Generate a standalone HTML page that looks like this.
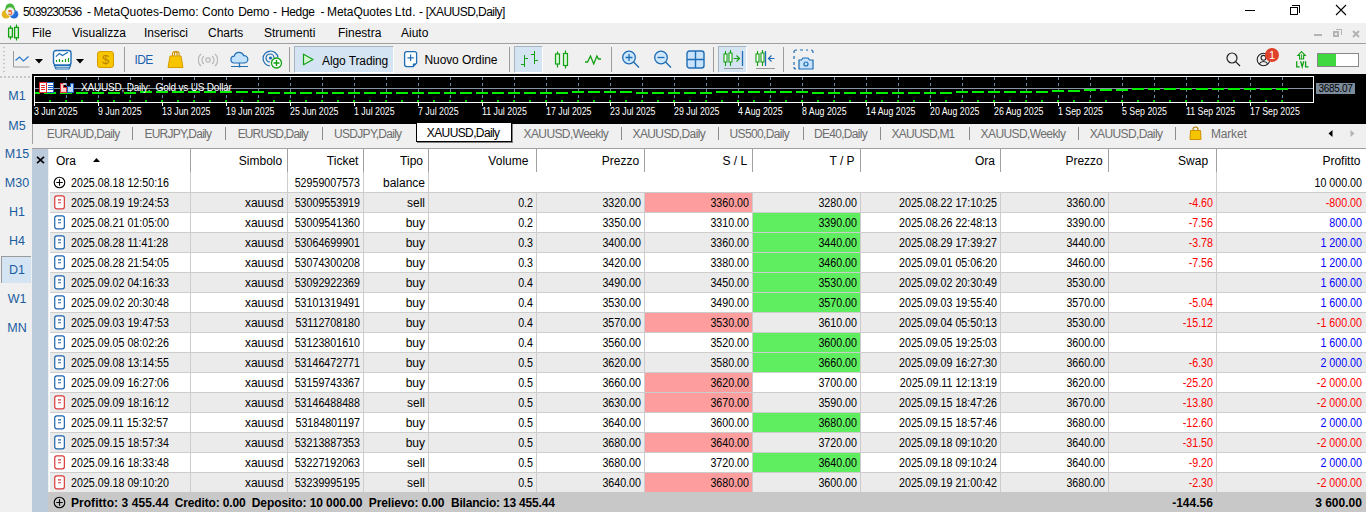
<!DOCTYPE html><html><head><meta charset="utf-8"><style>
*{box-sizing:border-box;margin:0;padding:0}
html,body{width:1366px;height:512px;overflow:hidden;background:#f0f0f0;font-family:"Liberation Sans",sans-serif;font-size:12px;color:#000}
.a{position:absolute;white-space:pre}
.t{position:absolute;white-space:pre;line-height:20px;height:20px}
.r{text-align:right}
</style></head><body>
<div class="a" style="left:0;top:0;width:1366px;height:23px;background:#fff"></div>
<div class="t" style="left:23.0px;top:2px;letter-spacing:-0.828px">5039230536</div>
<div class="t" style="left:87.0px;top:2px;letter-spacing:0.000px">-</div>
<div class="t" style="left:93.4px;top:2px;letter-spacing:0.025px">MetaQuotes-Demo:</div>
<div class="t" style="left:202.0px;top:2px;letter-spacing:-0.033px">Conto</div>
<div class="t" style="left:238.2px;top:2px;letter-spacing:-0.272px">Demo</div>
<div class="t" style="left:273.0px;top:2px;letter-spacing:0.000px">-</div>
<div class="t" style="left:280.9px;top:2px;letter-spacing:-0.319px">Hedge</div>
<div class="t" style="left:320.6px;top:2px;letter-spacing:0.000px">-</div>
<div class="t" style="left:327.0px;top:2px;letter-spacing:-0.053px">MetaQuotes</div>
<div class="t" style="left:394.7px;top:2px;letter-spacing:0.328px">Ltd.</div>
<div class="t" style="left:418.9px;top:2px;letter-spacing:0.000px">-</div>
<div class="t" style="left:425.8px;top:2px;letter-spacing:-0.553px">[XAUUSD,Daily]</div>
<svg class="a" style="left:0;top:0" width="22" height="22" viewBox="0 0 22 22"><path d="M4.5 10.5A6 6 0 0 1 15.5 9.5L14 12H6z" fill="#3cb034"/><circle cx="10" cy="8" r="4.5" fill="#44b83a"/><circle cx="6" cy="14.2" r="4.3" fill="#e5b51d"/><circle cx="14" cy="14.2" r="4.3" fill="#2370d8"/><circle cx="10.1" cy="11.6" r="4.2" fill="#f3f1ee" stroke="#d8d2c8" stroke-width="0.5"/><text x="10.2" y="14.6" font-size="8" font-weight="bold" fill="#e06018" text-anchor="middle" font-family="Liberation Sans">5</text></svg>
<div class="a" style="left:1245px;top:10px;width:10px;height:1px;background:#000"></div>
<div class="a" style="left:1290px;top:7px;width:8px;height:8px;border:1px solid #000;background:#fff"></div>
<div class="a" style="left:1292px;top:5px;width:8px;height:8px;border-top:1px solid #000;border-right:1px solid #000"></div>
<svg class="a" style="left:1335px;top:4px" width="12" height="12" viewBox="0 0 12 12"><path d="M1 1L11 11M11 1L1 11" stroke="#000" stroke-width="1.1"/></svg>
<div class="a" style="left:0;top:23px;width:1366px;height:20px;background:#f0f0f0"></div>
<div class="a" style="left:0;top:43px;width:1366px;height:1px;background:#a0a0a0"></div>
<svg class="a" style="left:7px;top:24px" width="14" height="17" viewBox="0 0 14 17">
<path d="M3.5 1.5v14M9.5 0.5v16" stroke="#10a010" stroke-width="1.2"/><rect x="1.6" y="4.2" width="3.8" height="8.8" fill="#e0f8e0" stroke="#10a010" stroke-width="1.3"/><rect x="7.6" y="3.4" width="3.8" height="10.4" fill="#e0f8e0" stroke="#10a010" stroke-width="1.3"/></svg>
<div class="t" style="left:32px;top:23px;line-height:21px">File</div>
<div class="t" style="left:72px;top:23px;line-height:21px">Visualizza</div>
<div class="t" style="left:144px;top:23px;line-height:21px">Inserisci</div>
<div class="t" style="left:208px;top:23px;line-height:21px">Charts</div>
<div class="t" style="left:264px;top:23px;line-height:21px">Strumenti</div>
<div class="t" style="left:338px;top:23px;line-height:21px">Finestra</div>
<div class="t" style="left:401px;top:23px;line-height:21px">Aiuto</div>
<div class="a" style="left:1314px;top:34px;width:8px;height:2px;background:#b4b4b4"></div>
<div class="a" style="left:1333px;top:31px;width:6px;height:6px;border:2px solid #b4b4b4"></div>
<div class="a" style="left:1336px;top:29px;width:6px;height:6px;border-top:1px solid #b4b4b4;border-right:1px solid #b4b4b4"></div>
<svg class="a" style="left:1352px;top:30px" width="8" height="8" viewBox="0 0 8 8"><path d="M1 1L7 7M7 1L1 7" stroke="#b4b4b4" stroke-width="2"/></svg>
<svg class="a" style="left:1px;top:46px" width="5" height="28"><path d="M2 2L4 1" stroke="#c4c4c4" stroke-width="1.2"/><path d="M2 6L4 5" stroke="#c4c4c4" stroke-width="1.2"/><path d="M2 10L4 9" stroke="#c4c4c4" stroke-width="1.2"/><path d="M2 14L4 13" stroke="#c4c4c4" stroke-width="1.2"/><path d="M2 18L4 17" stroke="#c4c4c4" stroke-width="1.2"/><path d="M2 22L4 21" stroke="#c4c4c4" stroke-width="1.2"/><path d="M2 26L4 25" stroke="#c4c4c4" stroke-width="1.2"/></svg>
<svg class="a" style="left:12px;top:50px" width="20" height="18" viewBox="0 0 20 18"><path d="M1.5 1v16h16" stroke="#9a9a9a" stroke-width="1" fill="none"/><path d="M3.5 10.5l4-3.5 4 4 5-4.5" stroke="#2a78c8" stroke-width="1.2" fill="none"/></svg>
<svg class="a" style="left:35px;top:59px" width="9" height="5"><path d="M0 0h8l-4 4.5z" fill="#000"/></svg>
<svg class="a" style="left:52px;top:49px" width="22" height="22" viewBox="0 0 22 22"><rect x="1.5" y="1.5" width="17.5" height="14.5" rx="2.5" fill="#fff" stroke="#1f6db5" stroke-width="1.4"/><path d="M3.8 7.6l3.6-3 3 2 5.6-3.4" stroke="#1f6db5" stroke-width="1.2" fill="none"/><path d="M4.5 13v-2M7.5 13v-3M10.5 13v-2M13.5 13v-3M16.5 13v-4" stroke="#14a014" stroke-width="1.2"/><path d="M2.5 16.5h16l-1.5 3.5h-13z" fill="#fff" stroke="#1f6db5" stroke-width="1.2"/><path d="M4 18.2h13" stroke="#1f6db5" stroke-width="1"/></svg>
<svg class="a" style="left:76px;top:59px" width="9" height="5"><path d="M0 0h8l-4 4.5z" fill="#000"/></svg>
<div class="a" style="left:97px;top:51px;width:17px;height:17px;background:#f7c600;border:1px solid #d79c00;border-radius:3px"></div>
<div class="t" style="left:97px;top:50px;width:17px;text-align:center;color:#b88300;font-size:13px;line-height:19px">$</div>
<div class="a" style="left:124px;top:47px;width:1px;height:25px;background:#9c9c9c"></div>
<div class="t" style="left:134.5px;top:50px;color:#1a62b0;font-size:12px;letter-spacing:-0.6px;transform:scaleY(1.05)">IDE</div>
<svg class="a" style="left:167px;top:50px" width="17" height="19" viewBox="0 0 17 19"><path d="M5.5 6V3.8a2.3 2.3 0 0 1 4.6 0V6M7.5 6V3.8a2.3 2.3 0 0 1 4.6 0V6" stroke="#cf9200" stroke-width="1.1" fill="none"/><path d="M3 6h11l2 11.5H1z" fill="#f7c600" stroke="#d79c00" stroke-width="1"/></svg>
<svg class="a" style="left:198px;top:53px" width="20" height="14" viewBox="0 0 20 14"><circle cx="10" cy="7" r="2.2" stroke="#b8b8b8" stroke-width="1.2" fill="none"/><path d="M6 3a5 5 0 0 0 0 8M14 3a5 5 0 0 1 0 8M3 1a8 8 0 0 0 0 12M17 1a8 8 0 0 1 0 12" stroke="#b8b8b8" stroke-width="1.2" fill="none"/></svg>
<svg class="a" style="left:230px;top:51px" width="19" height="17" viewBox="0 0 19 17"><path d="M4.5 12a3.4 3.4 0 0 1-.3-6.8 5 5 0 0 1 9.5-.6 3.4 3.4 0 0 1 .8 7.4z" fill="#c3e2fb" stroke="#1f6db5" stroke-width="1.2"/><path d="M9.5 12v3.5M1 15.5h17" stroke="#1f6db5" stroke-width="1.2"/><circle cx="9.5" cy="15.5" r="1.1" fill="#1f6db5"/></svg>
<svg class="a" style="left:262px;top:50px" width="21" height="19" viewBox="0 0 21 19"><path d="M8 16A7.5 7.5 0 1 1 16 7.5" stroke="#1f6db5" stroke-width="1.2" fill="none"/><path d="M8 12A4 4 0 1 1 12 8" stroke="#1f6db5" stroke-width="1.2" fill="none"/><circle cx="8.5" cy="8" r="1.6" fill="#1f6db5"/><circle cx="14.5" cy="13" r="5" fill="#fff" stroke="#14a014" stroke-width="1.3"/><path d="M14.5 10v6M11.5 13h6" stroke="#14a014" stroke-width="1.4"/></svg>
<div class="a" style="left:289px;top:47px;width:1px;height:25px;background:#9c9c9c"></div>
<div class="a" style="left:294px;top:46px;width:100px;height:27px;background:#d5e4f3;border-left:1px solid #a8b4c0;border-top:1px solid #a8b4c0;border-right:1px solid #fff;border-bottom:1px solid #fff"></div>
<svg class="a" style="left:302px;top:53px" width="13" height="13" viewBox="0 0 13 13"><path d="M1.5 1.2l9.5 5.3-9.5 5.3z" stroke="#14a014" stroke-width="1.2" fill="#d4f5d4" stroke-linejoin="round"/></svg>
<div class="t" style="left:322px;top:50.5px;letter-spacing:-0.1px">Algo Trading</div>
<svg class="a" style="left:403px;top:50px" width="16" height="19" viewBox="0 0 16 19"><path d="M3.6 1.6h8a2 2 0 0 1 2 2v9.5l-3.5 3.5h-6.5a2 2 0 0 1-2-2v-11a2 2 0 0 1 2-2z" fill="#fff" stroke="#1f6db5" stroke-width="1.3"/><path d="M7.6 4.5v6.5M4.4 7.8h6.4" stroke="#1f6db5" stroke-width="1.2"/><path d="M9.8 16.8v-3.4h3.6z" fill="#1f6db5"/></svg>
<div class="t" style="left:424.5px;top:50px;letter-spacing:-0.1px">Nuovo Ordine</div>
<div class="a" style="left:509px;top:47px;width:1px;height:25px;background:#9c9c9c"></div>
<div class="a" style="left:514px;top:46px;width:29px;height:27px;background:#d5e4f3;border-left:1px solid #a8b4c0;border-top:1px solid #a8b4c0;border-right:1px solid #fff;border-bottom:1px solid #fff"></div>
<svg class="a" style="left:518px;top:49px" width="24" height="22" viewBox="0 0 24 22" shape-rendering="crispEdges"><path d="M6.5 6v12M3 15.5h3.5M6.5 9.5h3M16.5 2v12.5M13 5.5h3.5M16.5 11.5h3.5" stroke="#14a014" stroke-width="1.4" fill="none"/></svg>
<svg class="a" style="left:553px;top:50px" width="17" height="19" viewBox="0 0 17 19"><path d="M4.5 1.5v16M12.5 0.5v18" stroke="#14a014" stroke-width="1.2"/><rect x="2.5" y="4" width="4" height="10" fill="#d6f6d6" stroke="#14a014" stroke-width="1.2"/><rect x="10.5" y="3.5" width="4" height="12" fill="#d6f6d6" stroke="#14a014" stroke-width="1.2"/></svg>
<svg class="a" style="left:584px;top:53px" width="18" height="12" viewBox="0 0 18 12"><path d="M1 9h2.5l3-6 3.2 8 3.2-8 1.6 3h2.5" stroke="#14a014" stroke-width="1.3" fill="none"/></svg>
<div class="a" style="left:611px;top:47px;width:1px;height:25px;background:#9c9c9c"></div>
<svg class="a" style="left:621px;top:50px" width="20" height="19" viewBox="0 0 20 19"><circle cx="8" cy="7.5" r="6.3" fill="#cfe7fc" stroke="#1f6db5" stroke-width="1.3"/><path d="M12.6 12.1l5.4 5.4" stroke="#1f6db5" stroke-width="1.4"/><path d="M8 4v7M4.5 7.5h7" stroke="#1f6db5" stroke-width="1.3"/></svg>
<svg class="a" style="left:653px;top:50px" width="20" height="19" viewBox="0 0 20 19"><circle cx="8" cy="7.5" r="6.3" fill="#cfe7fc" stroke="#1f6db5" stroke-width="1.3"/><path d="M12.6 12.1l5.4 5.4" stroke="#1f6db5" stroke-width="1.4"/><path d="M4.5 7.5h7" stroke="#1f6db5" stroke-width="1.3"/></svg>
<svg class="a" style="left:686px;top:50px" width="19" height="19" viewBox="0 0 19 19"><rect x="1" y="1" width="17" height="17" rx="2.5" fill="#c8e3fb" stroke="#1f6db5" stroke-width="1.4"/><path d="M9.5 1v17M1 9.5h17" stroke="#1f6db5" stroke-width="1.4"/></svg>
<div class="a" style="left:713px;top:47px;width:1px;height:25px;background:#9c9c9c"></div>
<div class="a" style="left:718px;top:46px;width:29px;height:27px;background:#d5e4f3;border-left:1px solid #a8b4c0;border-top:1px solid #a8b4c0;border-right:1px solid #fff;border-bottom:1px solid #fff"></div>
<svg class="a" style="left:722px;top:49px" width="24" height="22" viewBox="0 0 24 22"><path d="M3.5 2v15M8.5 1v16" stroke="#14a014" stroke-width="1.1"/><rect x="2" y="5" width="3" height="8" fill="#fff" stroke="#14a014" stroke-width="1.1"/><rect x="7" y="4" width="3" height="9" fill="#fff" stroke="#14a014" stroke-width="1.1"/><path d="M11.5 9.5h6M14.5 6.5l3 3-3 3" stroke="#14a014" stroke-width="1.2" fill="none"/><path d="M20.5 2v15" stroke="#1f6db5" stroke-width="1.3"/><path d="M2 19.5h19" stroke="#9a9a9a" stroke-width="1"/></svg>
<svg class="a" style="left:754px;top:49px" width="24" height="22" viewBox="0 0 24 22"><path d="M3.5 2v15M8.5 1v16" stroke="#14a014" stroke-width="1.1"/><rect x="2" y="5" width="3" height="8" fill="#fff" stroke="#14a014" stroke-width="1.1"/><rect x="7" y="4" width="3" height="9" fill="#fff" stroke="#14a014" stroke-width="1.1"/><path d="M11.5 2v15" stroke="#1f6db5" stroke-width="1.3"/><path d="M20.5 9.5h-6M17.5 6.5l-3 3 3 3" stroke="#1f6db5" stroke-width="1.2" fill="none"/><path d="M2 19.5h19" stroke="#9a9a9a" stroke-width="1"/></svg>
<div class="a" style="left:783px;top:47px;width:1px;height:25px;background:#9c9c9c"></div>
<svg class="a" style="left:793px;top:49px" width="21" height="21" viewBox="0 0 21 21"><path d="M1 4V3a2 2 0 0 1 2-2h1M7 1h3M13 1h2M18 1a2 2 0 0 1 2 2v1M1 7v3M1 13v3M1 18a2 2 0 0 0 2 2" stroke="#1f6db5" stroke-width="1.2" fill="none"/><path d="M6 11h2.5l1.5-2h5l1.5 2h3.5v9H6z" fill="#c8e3fb" stroke="#1f6db5" stroke-width="1.2"/><circle cx="13" cy="15" r="2" stroke="#1f6db5" stroke-width="1.2" fill="none"/></svg>
<svg class="a" style="left:1226px;top:52px" width="15" height="15" viewBox="0 0 15 15"><circle cx="6" cy="6" r="5" stroke="#222" stroke-width="1.2" fill="none"/><path d="M9.6 9.6L14 14" stroke="#222" stroke-width="1.3"/></svg>
<svg class="a" style="left:1256px;top:52px" width="15" height="15" viewBox="0 0 15 15"><circle cx="7.5" cy="7.5" r="6.3" stroke="#222" stroke-width="1.1" fill="none"/><circle cx="7.5" cy="5.8" r="2.4" stroke="#222" stroke-width="1.1" fill="none"/><path d="M3.2 12a5 5 0 0 1 8.6 0" stroke="#222" stroke-width="1.1" fill="none"/></svg>
<div class="a" style="left:1265px;top:48px;width:14px;height:14px;border-radius:7px;background:#e0412b;color:#fff;font-size:11px;line-height:14px;text-align:center">1</div>
<svg class="a" style="left:1294px;top:50px" width="16" height="19" viewBox="0 0 16 19"><path d="M7.6 1.6l3.7 3.8H9.6v3.6H5.6V5.4H3.9z" fill="none" stroke="#14a014" stroke-width="1.1"/><path d="M7.6 4.2v4.6" stroke="#14a014" stroke-width="0.9"/><path d="M2.7 11.2v5.6h3M6.6 11.2l1.6 5.6 1.6-5.6M11.6 11.2v5.6h3" fill="none" stroke="#14a014" stroke-width="1.3"/></svg>
<div class="a" style="left:1317px;top:53px;width:42px;height:14px;border:1px solid #888;background:#fff"><div style="width:18px;height:12px;background:#3fd83f"></div></div>
<div class="a" style="left:0;top:76px;width:30px;height:2px;background:repeating-linear-gradient(90deg,#c8c8c8 0 2px,transparent 2px 4px)"></div>
<div class="a" style="left:1px;top:256px;width:30px;height:27px;background:#d5e4f3;border-top:1px solid #9a9a9a;border-left:1px solid #9a9a9a"></div>
<div class="t r" style="left:1px;width:32px;text-align:center;top:86px;color:#1a5c9f;font-size:12.5px">M1</div>
<div class="t r" style="left:1px;width:32px;text-align:center;top:116px;color:#1a5c9f;font-size:12.5px">M5</div>
<div class="t r" style="left:1px;width:32px;text-align:center;top:144px;color:#1a5c9f;font-size:12.5px">M15</div>
<div class="t r" style="left:1px;width:32px;text-align:center;top:173px;color:#1a5c9f;font-size:12.5px">M30</div>
<div class="t r" style="left:1px;width:32px;text-align:center;top:202px;color:#1a5c9f;font-size:12.5px">H1</div>
<div class="t r" style="left:1px;width:32px;text-align:center;top:231px;color:#1a5c9f;font-size:12.5px">H4</div>
<div class="t r" style="left:1px;width:32px;text-align:center;top:260px;color:#1a5c9f;font-size:12.5px">D1</div>
<div class="t r" style="left:1px;width:32px;text-align:center;top:289px;color:#1a5c9f;font-size:12.5px">W1</div>
<div class="t r" style="left:1px;width:32px;text-align:center;top:318px;color:#1a5c9f;font-size:12.5px">MN</div>
<div class="a" style="left:32px;top:74px;width:1334px;height:50px;background:#000"></div>
<svg class="a" style="left:0;top:0" width="1366" height="130" shape-rendering="crispEdges"><path d="M34 76.5H1314M34 102.5H1314M34.5 76V103M1313.5 76V103" stroke="#fff" stroke-width="1"/><path d="M66.5 77V102" stroke="#6c87a5" stroke-width="1" stroke-dasharray="3 3"/><path d="M98.5 77V102" stroke="#6c87a5" stroke-width="1" stroke-dasharray="3 3"/><path d="M130.5 77V102" stroke="#6c87a5" stroke-width="1" stroke-dasharray="3 3"/><path d="M162.5 77V102" stroke="#6c87a5" stroke-width="1" stroke-dasharray="3 3"/><path d="M194.5 77V102" stroke="#6c87a5" stroke-width="1" stroke-dasharray="3 3"/><path d="M226.5 77V102" stroke="#6c87a5" stroke-width="1" stroke-dasharray="3 3"/><path d="M258.5 77V102" stroke="#6c87a5" stroke-width="1" stroke-dasharray="3 3"/><path d="M290.5 77V102" stroke="#6c87a5" stroke-width="1" stroke-dasharray="3 3"/><path d="M322.5 77V102" stroke="#6c87a5" stroke-width="1" stroke-dasharray="3 3"/><path d="M354.5 77V102" stroke="#6c87a5" stroke-width="1" stroke-dasharray="3 3"/><path d="M386.5 77V102" stroke="#6c87a5" stroke-width="1" stroke-dasharray="3 3"/><path d="M418.5 77V102" stroke="#6c87a5" stroke-width="1" stroke-dasharray="3 3"/><path d="M450.5 77V102" stroke="#6c87a5" stroke-width="1" stroke-dasharray="3 3"/><path d="M482.5 77V102" stroke="#6c87a5" stroke-width="1" stroke-dasharray="3 3"/><path d="M514.5 77V102" stroke="#6c87a5" stroke-width="1" stroke-dasharray="3 3"/><path d="M546.5 77V102" stroke="#6c87a5" stroke-width="1" stroke-dasharray="3 3"/><path d="M578.5 77V102" stroke="#6c87a5" stroke-width="1" stroke-dasharray="3 3"/><path d="M610.5 77V102" stroke="#6c87a5" stroke-width="1" stroke-dasharray="3 3"/><path d="M642.5 77V102" stroke="#6c87a5" stroke-width="1" stroke-dasharray="3 3"/><path d="M674.5 77V102" stroke="#6c87a5" stroke-width="1" stroke-dasharray="3 3"/><path d="M706.5 77V102" stroke="#6c87a5" stroke-width="1" stroke-dasharray="3 3"/><path d="M738.5 77V102" stroke="#6c87a5" stroke-width="1" stroke-dasharray="3 3"/><path d="M770.5 77V102" stroke="#6c87a5" stroke-width="1" stroke-dasharray="3 3"/><path d="M802.5 77V102" stroke="#6c87a5" stroke-width="1" stroke-dasharray="3 3"/><path d="M834.5 77V102" stroke="#6c87a5" stroke-width="1" stroke-dasharray="3 3"/><path d="M866.5 77V102" stroke="#6c87a5" stroke-width="1" stroke-dasharray="3 3"/><path d="M898.5 77V102" stroke="#6c87a5" stroke-width="1" stroke-dasharray="3 3"/><path d="M930.5 77V102" stroke="#6c87a5" stroke-width="1" stroke-dasharray="3 3"/><path d="M962.5 77V102" stroke="#6c87a5" stroke-width="1" stroke-dasharray="3 3"/><path d="M994.5 77V102" stroke="#6c87a5" stroke-width="1" stroke-dasharray="3 3"/><path d="M1026.5 77V102" stroke="#6c87a5" stroke-width="1" stroke-dasharray="3 3"/><path d="M1058.5 77V102" stroke="#6c87a5" stroke-width="1" stroke-dasharray="3 3"/><path d="M1090.5 77V102" stroke="#6c87a5" stroke-width="1" stroke-dasharray="3 3"/><path d="M1122.5 77V102" stroke="#6c87a5" stroke-width="1" stroke-dasharray="3 3"/><path d="M1154.5 77V102" stroke="#6c87a5" stroke-width="1" stroke-dasharray="3 3"/><path d="M1186.5 77V102" stroke="#6c87a5" stroke-width="1" stroke-dasharray="3 3"/><path d="M1218.5 77V102" stroke="#6c87a5" stroke-width="1" stroke-dasharray="3 3"/><path d="M1250.5 77V102" stroke="#6c87a5" stroke-width="1" stroke-dasharray="3 3"/><path d="M1282.5 77V102" stroke="#6c87a5" stroke-width="1" stroke-dasharray="3 3"/><path d="M35 88.5H1313" stroke="#8795a4" stroke-width="1"/><rect x="35" y="92" width="5" height="2" fill="#00f000"/><rect x="44" y="92" width="12" height="2" fill="#00f000"/><rect x="60" y="92" width="12" height="2" fill="#00f000"/><rect x="76" y="92" width="12" height="2" fill="#00f000"/><rect x="92" y="92" width="12" height="2" fill="#00f000"/><rect x="108" y="92" width="12" height="2" fill="#00f000"/><rect x="124" y="92" width="12" height="2" fill="#00f000"/><rect x="140" y="91" width="12" height="2" fill="#00f000"/><rect x="156" y="91" width="12" height="2" fill="#00f000"/><rect x="172" y="91" width="12" height="2" fill="#00f000"/><rect x="188" y="91" width="12" height="2" fill="#00f000"/><rect x="204" y="91" width="12" height="2" fill="#00f000"/><rect x="220" y="91" width="12" height="2" fill="#00f000"/><rect x="236" y="91" width="12" height="2" fill="#00f000"/><rect x="252" y="91" width="12" height="2" fill="#00f000"/><rect x="268" y="92" width="12" height="2" fill="#00f000"/><rect x="284" y="92" width="12" height="2" fill="#00f000"/><rect x="300" y="92" width="12" height="2" fill="#00f000"/><rect x="316" y="92" width="12" height="2" fill="#00f000"/><rect x="332" y="92" width="12" height="2" fill="#00f000"/><rect x="348" y="92" width="12" height="2" fill="#00f000"/><rect x="364" y="92" width="12" height="2" fill="#00f000"/><rect x="380" y="92" width="12" height="2" fill="#00f000"/><rect x="396" y="92" width="12" height="2" fill="#00f000"/><rect x="412" y="92" width="12" height="2" fill="#00f000"/><rect x="428" y="92" width="12" height="2" fill="#00f000"/><rect x="444" y="92" width="12" height="2" fill="#00f000"/><rect x="460" y="92" width="12" height="2" fill="#00f000"/><rect x="476" y="92" width="12" height="2" fill="#00f000"/><rect x="492" y="92" width="12" height="2" fill="#00f000"/><rect x="508" y="92" width="12" height="2" fill="#00f000"/><rect x="524" y="92" width="12" height="2" fill="#00f000"/><rect x="540" y="92" width="12" height="2" fill="#00f000"/><rect x="556" y="92" width="12" height="2" fill="#00f000"/><rect x="572" y="91" width="12" height="2" fill="#00f000"/><rect x="588" y="91" width="12" height="2" fill="#00f000"/><rect x="604" y="91" width="12" height="2" fill="#00f000"/><rect x="620" y="91" width="12" height="2" fill="#00f000"/><rect x="636" y="92" width="12" height="2" fill="#00f000"/><rect x="652" y="92" width="12" height="2" fill="#00f000"/><rect x="668" y="92" width="12" height="2" fill="#00f000"/><rect x="684" y="92" width="12" height="2" fill="#00f000"/><rect x="700" y="92" width="12" height="2" fill="#00f000"/><rect x="716" y="91" width="12" height="2" fill="#00f000"/><rect x="732" y="91" width="12" height="2" fill="#00f000"/><rect x="748" y="91" width="12" height="2" fill="#00f000"/><rect x="764" y="91" width="12" height="2" fill="#00f000"/><rect x="780" y="91" width="12" height="2" fill="#00f000"/><rect x="796" y="91" width="12" height="2" fill="#00f000"/><rect x="812" y="92" width="12" height="2" fill="#00f000"/><rect x="828" y="92" width="12" height="2" fill="#00f000"/><rect x="844" y="92" width="12" height="2" fill="#00f000"/><rect x="860" y="92" width="12" height="2" fill="#00f000"/><rect x="876" y="92" width="12" height="2" fill="#00f000"/><rect x="892" y="92" width="12" height="2" fill="#00f000"/><rect x="908" y="92" width="12" height="2" fill="#00f000"/><rect x="924" y="92" width="12" height="2" fill="#00f000"/><rect x="940" y="92" width="12" height="2" fill="#00f000"/><rect x="956" y="91" width="12" height="2" fill="#00f000"/><rect x="972" y="91" width="12" height="2" fill="#00f000"/><rect x="988" y="91" width="12" height="2" fill="#00f000"/><rect x="1004" y="91" width="12" height="2" fill="#00f000"/><rect x="1020" y="91" width="12" height="2" fill="#00f000"/><rect x="1036" y="91" width="12" height="2" fill="#00f000"/><rect x="1052" y="90" width="12" height="2" fill="#00f000"/><rect x="1068" y="90" width="12" height="2" fill="#00f000"/><rect x="1084" y="89" width="12" height="2" fill="#00f000"/><rect x="1100" y="89" width="12" height="2" fill="#00f000"/><rect x="1116" y="89" width="12" height="2" fill="#00f000"/><rect x="1132" y="88" width="12" height="2" fill="#00f000"/><rect x="1148" y="88" width="12" height="2" fill="#00f000"/><rect x="1164" y="88" width="12" height="2" fill="#00f000"/><rect x="1180" y="88" width="12" height="2" fill="#00f000"/><rect x="1196" y="88" width="12" height="2" fill="#00f000"/><rect x="1212" y="88" width="12" height="2" fill="#00f000"/><rect x="1228" y="88" width="12" height="2" fill="#00f000"/><rect x="1244" y="88" width="12" height="2" fill="#00f000"/><rect x="1260" y="88" width="12" height="2" fill="#00f000"/><rect x="1276" y="88" width="12" height="2" fill="#00f000"/><rect x="49" y="100" width="2" height="2" fill="#00c800"/><rect x="65" y="100" width="2" height="2" fill="#00c800"/><rect x="81" y="100" width="2" height="2" fill="#00c800"/><rect x="97" y="100" width="2" height="2" fill="#00c800"/><rect x="113" y="100" width="2" height="2" fill="#00c800"/><rect x="129" y="100" width="2" height="2" fill="#00c800"/><rect x="145" y="100" width="2" height="2" fill="#00c800"/><rect x="161" y="100" width="2" height="2" fill="#00c800"/><rect x="177" y="100" width="2" height="2" fill="#00c800"/><rect x="193" y="100" width="2" height="2" fill="#00c800"/><rect x="209" y="100" width="2" height="2" fill="#00c800"/><rect x="225" y="100" width="2" height="2" fill="#00c800"/><rect x="241" y="100" width="2" height="2" fill="#00c800"/><rect x="257" y="100" width="2" height="2" fill="#00c800"/><rect x="273" y="100" width="2" height="2" fill="#00c800"/><rect x="289" y="100" width="2" height="2" fill="#00c800"/><rect x="305" y="100" width="2" height="2" fill="#00c800"/><rect x="321" y="100" width="2" height="2" fill="#00c800"/><rect x="337" y="100" width="2" height="2" fill="#00c800"/><rect x="353" y="100" width="2" height="2" fill="#00c800"/><rect x="369" y="100" width="2" height="2" fill="#00c800"/><rect x="385" y="100" width="2" height="2" fill="#00c800"/><rect x="401" y="100" width="2" height="2" fill="#00c800"/><rect x="417" y="100" width="2" height="2" fill="#00c800"/><rect x="433" y="100" width="2" height="2" fill="#00c800"/><rect x="449" y="100" width="2" height="2" fill="#00c800"/><rect x="465" y="100" width="2" height="2" fill="#00c800"/><rect x="481" y="100" width="2" height="2" fill="#00c800"/><rect x="497" y="100" width="2" height="2" fill="#00c800"/><rect x="513" y="100" width="2" height="2" fill="#00c800"/><rect x="529" y="100" width="2" height="2" fill="#00c800"/><rect x="545" y="100" width="2" height="2" fill="#00c800"/><rect x="561" y="100" width="2" height="2" fill="#00c800"/><rect x="577" y="100" width="2" height="2" fill="#00c800"/><rect x="593" y="100" width="2" height="2" fill="#00c800"/><rect x="609" y="100" width="2" height="2" fill="#00c800"/><rect x="625" y="100" width="2" height="2" fill="#00c800"/><rect x="641" y="100" width="2" height="2" fill="#00c800"/><rect x="657" y="100" width="2" height="2" fill="#00c800"/><rect x="673" y="100" width="2" height="2" fill="#00c800"/><rect x="689" y="100" width="2" height="2" fill="#00c800"/><rect x="705" y="100" width="2" height="2" fill="#00c800"/><rect x="721" y="100" width="2" height="2" fill="#00c800"/><rect x="737" y="100" width="2" height="2" fill="#00c800"/><rect x="753" y="100" width="2" height="2" fill="#00c800"/><rect x="769" y="100" width="2" height="2" fill="#00c800"/><rect x="785" y="100" width="2" height="2" fill="#00c800"/><rect x="801" y="100" width="2" height="2" fill="#00c800"/><rect x="817" y="100" width="2" height="2" fill="#00c800"/><rect x="833" y="100" width="2" height="2" fill="#00c800"/><rect x="849" y="100" width="2" height="2" fill="#00c800"/><rect x="865" y="100" width="2" height="2" fill="#00c800"/><rect x="881" y="100" width="2" height="2" fill="#00c800"/><rect x="897" y="100" width="2" height="2" fill="#00c800"/><rect x="913" y="100" width="2" height="2" fill="#00c800"/><rect x="929" y="100" width="2" height="2" fill="#00c800"/><rect x="945" y="100" width="2" height="2" fill="#00c800"/><rect x="961" y="100" width="2" height="2" fill="#00c800"/><rect x="977" y="100" width="2" height="2" fill="#00c800"/><rect x="993" y="100" width="2" height="2" fill="#00c800"/><rect x="1009" y="100" width="2" height="2" fill="#00c800"/><rect x="1025" y="100" width="2" height="2" fill="#00c800"/><rect x="1041" y="100" width="2" height="2" fill="#00c800"/><rect x="1057" y="100" width="2" height="2" fill="#00c800"/><rect x="1073" y="100" width="2" height="2" fill="#00c800"/><rect x="1089" y="100" width="2" height="2" fill="#00c800"/><rect x="1105" y="100" width="2" height="2" fill="#00c800"/><rect x="1121" y="100" width="2" height="2" fill="#00c800"/><rect x="1137" y="100" width="2" height="2" fill="#00c800"/><rect x="1153" y="100" width="2" height="2" fill="#00c800"/><rect x="1169" y="100" width="2" height="2" fill="#00c800"/><rect x="1185" y="100" width="2" height="2" fill="#00c800"/><rect x="1201" y="100" width="2" height="2" fill="#00c800"/><rect x="1217" y="100" width="2" height="2" fill="#00c800"/><rect x="1233" y="100" width="2" height="2" fill="#00c800"/><rect x="1249" y="100" width="2" height="2" fill="#00c800"/><rect x="1265" y="100" width="2" height="2" fill="#00c800"/><rect x="1281" y="100" width="2" height="2" fill="#00c800"/><path d="M34.5 103V106" stroke="#fff"/><path d="M98.5 103V106" stroke="#fff"/><path d="M162.5 103V106" stroke="#fff"/><path d="M226.5 103V106" stroke="#fff"/><path d="M290.5 103V106" stroke="#fff"/><path d="M354.5 103V106" stroke="#fff"/><path d="M418.5 103V106" stroke="#fff"/><path d="M482.5 103V106" stroke="#fff"/><path d="M546.5 103V106" stroke="#fff"/><path d="M610.5 103V106" stroke="#fff"/><path d="M674.5 103V106" stroke="#fff"/><path d="M738.5 103V106" stroke="#fff"/><path d="M802.5 103V106" stroke="#fff"/><path d="M866.5 103V106" stroke="#fff"/><path d="M930.5 103V106" stroke="#fff"/><path d="M994.5 103V106" stroke="#fff"/><path d="M1058.5 103V106" stroke="#fff"/><path d="M1122.5 103V106" stroke="#fff"/><path d="M1186.5 103V106" stroke="#fff"/><path d="M1250.5 103V106" stroke="#fff"/></svg>
<svg class="a" style="left:39px;top:82px" width="36" height="11" viewBox="0 0 36 11" shape-rendering="crispEdges"><rect x="0.5" y="0.5" width="14" height="10" fill="#fff" stroke="#2060c0"/><rect x="0.5" y="0.5" width="7" height="10" fill="#fff" stroke="#e03030"/><path d="M2 3h4M2 5h4M2 7h4" stroke="#e03030"/><path d="M9 3h5M9 5h5M9 7h5" stroke="#2060c0"/><path d="M21.5 1.5v9h6V5.5h-3V1.5z" fill="#fbd0d0" stroke="#e03030"/><rect x="24" y="1" width="3" height="1.5" fill="#c8c8c8"/><path d="M28.5 10.5v-6h3V1.5h3v9z" fill="#b8dcf8" stroke="#2060c0"/></svg>
<div class="t" style="left:81px;top:78px;color:#fff;font-size:10px;line-height:20px;letter-spacing:-0.2px">XAUUSD, Daily:  Gold vs US Dollar</div>
<div class="t" style="left:34px;top:102px;color:#fff;font-size:10px;transform:scaleX(0.88);transform-origin:0 0">3 Jun 2025</div>
<div class="t" style="left:98px;top:102px;color:#fff;font-size:10px;transform:scaleX(0.88);transform-origin:0 0">9 Jun 2025</div>
<div class="t" style="left:162px;top:102px;color:#fff;font-size:10px;transform:scaleX(0.88);transform-origin:0 0">13 Jun 2025</div>
<div class="t" style="left:226px;top:102px;color:#fff;font-size:10px;transform:scaleX(0.88);transform-origin:0 0">19 Jun 2025</div>
<div class="t" style="left:290px;top:102px;color:#fff;font-size:10px;transform:scaleX(0.88);transform-origin:0 0">25 Jun 2025</div>
<div class="t" style="left:354px;top:102px;color:#fff;font-size:10px;transform:scaleX(0.88);transform-origin:0 0">1 Jul 2025</div>
<div class="t" style="left:418px;top:102px;color:#fff;font-size:10px;transform:scaleX(0.88);transform-origin:0 0">7 Jul 2025</div>
<div class="t" style="left:482px;top:102px;color:#fff;font-size:10px;transform:scaleX(0.88);transform-origin:0 0">11 Jul 2025</div>
<div class="t" style="left:546px;top:102px;color:#fff;font-size:10px;transform:scaleX(0.88);transform-origin:0 0">17 Jul 2025</div>
<div class="t" style="left:610px;top:102px;color:#fff;font-size:10px;transform:scaleX(0.88);transform-origin:0 0">23 Jul 2025</div>
<div class="t" style="left:674px;top:102px;color:#fff;font-size:10px;transform:scaleX(0.88);transform-origin:0 0">29 Jul 2025</div>
<div class="t" style="left:738px;top:102px;color:#fff;font-size:10px;transform:scaleX(0.88);transform-origin:0 0">4 Aug 2025</div>
<div class="t" style="left:802px;top:102px;color:#fff;font-size:10px;transform:scaleX(0.88);transform-origin:0 0">8 Aug 2025</div>
<div class="t" style="left:866px;top:102px;color:#fff;font-size:10px;transform:scaleX(0.88);transform-origin:0 0">14 Aug 2025</div>
<div class="t" style="left:930px;top:102px;color:#fff;font-size:10px;transform:scaleX(0.88);transform-origin:0 0">20 Aug 2025</div>
<div class="t" style="left:994px;top:102px;color:#fff;font-size:10px;transform:scaleX(0.88);transform-origin:0 0">26 Aug 2025</div>
<div class="t" style="left:1058px;top:102px;color:#fff;font-size:10px;transform:scaleX(0.88);transform-origin:0 0">1 Sep 2025</div>
<div class="t" style="left:1122px;top:102px;color:#fff;font-size:10px;transform:scaleX(0.88);transform-origin:0 0">5 Sep 2025</div>
<div class="t" style="left:1186px;top:102px;color:#fff;font-size:10px;transform:scaleX(0.88);transform-origin:0 0">11 Sep 2025</div>
<div class="t" style="left:1250px;top:102px;color:#fff;font-size:10px;transform:scaleX(0.88);transform-origin:0 0">17 Sep 2025</div>
<div class="t" style="left:1316px;top:83px;width:39px;height:11px;line-height:12.5px;background:#7b8b9b;color:#000;font-size:10px;letter-spacing:-0.3px;text-align:center">3685.07</div>
<div class="a" style="left:32px;top:124px;width:1334px;height:24px;background:#f0f0f0"></div>
<div class="a" style="left:32px;top:124px;width:1px;height:20px;background:#a0a0a0"></div>
<div class="t" style="left:46.8px;top:123.5px;color:#6d6d6d;letter-spacing:-0.653px">EURAUD,Daily</div>
<div class="t" style="left:144.4px;top:123.5px;color:#6d6d6d;letter-spacing:-0.747px">EURJPY,Daily</div>
<div class="t" style="left:237.70000000000002px;top:123.5px;color:#6d6d6d;letter-spacing:-0.872px">EURUSD,Daily</div>
<div class="t" style="left:334.1px;top:123.5px;color:#6d6d6d;letter-spacing:-0.710px">USDJPY,Daily</div>
<div class="a" style="left:416px;top:123px;width:96px;height:19px;background:#fff;border:1px solid #000;border-top:none;box-shadow:1px 1px 0 #808080"></div>
<div class="t" style="left:426.8px;top:122.5px;color:#000;letter-spacing:-0.611px">XAUUSD,Daily</div>
<div class="t" style="left:523.5px;top:123.5px;color:#6d6d6d;letter-spacing:-0.597px">XAUUSD,Weekly</div>
<div class="t" style="left:632.5px;top:123.5px;color:#6d6d6d;letter-spacing:-0.611px">XAUUSD,Daily</div>
<div class="t" style="left:729.5999999999999px;top:123.5px;color:#6d6d6d;letter-spacing:-0.650px">US500,Daily</div>
<div class="t" style="left:813.9px;top:123.5px;color:#6d6d6d;letter-spacing:-0.681px">DE40,Daily</div>
<div class="t" style="left:891.5999999999999px;top:123.5px;color:#6d6d6d;letter-spacing:-0.789px">XAUUSD,M1</div>
<div class="t" style="left:980.5999999999999px;top:123.5px;color:#6d6d6d;letter-spacing:-0.597px">XAUUSD,Weekly</div>
<div class="t" style="left:1089.7px;top:123.5px;color:#6d6d6d;letter-spacing:-0.611px">XAUUSD,Daily</div>
<div class="t" style="left:1210.8999999999999px;top:123.5px;color:#6d6d6d;letter-spacing:-0.158px">Market</div>
<div class="a" style="left:132px;top:127px;width:1px;height:13px;background:#8c8c8c"></div>
<div class="a" style="left:225px;top:127px;width:1px;height:13px;background:#8c8c8c"></div>
<div class="a" style="left:322px;top:127px;width:1px;height:13px;background:#8c8c8c"></div>
<div class="a" style="left:621px;top:127px;width:1px;height:13px;background:#8c8c8c"></div>
<div class="a" style="left:718px;top:127px;width:1px;height:13px;background:#8c8c8c"></div>
<div class="a" style="left:803px;top:127px;width:1px;height:13px;background:#8c8c8c"></div>
<div class="a" style="left:880px;top:127px;width:1px;height:13px;background:#8c8c8c"></div>
<div class="a" style="left:969px;top:127px;width:1px;height:13px;background:#8c8c8c"></div>
<div class="a" style="left:1078px;top:127px;width:1px;height:13px;background:#8c8c8c"></div>
<div class="a" style="left:1175px;top:127px;width:1px;height:13px;background:#8c8c8c"></div>
<svg class="a" style="left:1189px;top:126px" width="13" height="15" viewBox="0 0 13 15"><path d="M4 5V3.5a2.5 2.5 0 0 1 5 0V5" stroke="#b07800" stroke-width="1.1" fill="none"/><path d="M1.5 4.5h10l.5 9H1z" fill="#f5c400" stroke="#d09000" stroke-width="1"/></svg>
<svg class="a" style="left:1328px;top:130px" width="5" height="8"><path d="M4.5 0v7L0.5 3.5z" fill="#000"/></svg>
<svg class="a" style="left:1350px;top:130px" width="5" height="8"><path d="M0.5 0v7l4-3.5z" fill="#b4b4b4"/></svg>
<div class="a" style="left:32px;top:148px;width:1334px;height:364px;background:#fff"></div>
<div class="a" style="left:32px;top:148px;width:1334px;height:1px;background:#a0a0a0"></div>
<div class="a" style="left:32px;top:149px;width:16px;height:363px;background:#bccbdc"></div>
<svg class="a" style="left:36px;top:156px" width="9" height="8"><path d="M1 0.8L8 7.2M8 0.8L1 7.2" stroke="#000" stroke-width="1.6"/></svg>
<div class="a" style="left:50px;top:172px;width:1316px;height:20px;background:#fff"></div>
<div class="a" style="left:50px;top:192px;width:1316px;height:20px;background:#ebebeb"></div>
<div class="a" style="left:50px;top:192px;width:1316px;height:1px;background:#cdcdcd"></div>
<div class="a" style="left:50px;top:212px;width:1316px;height:20px;background:#fff"></div>
<div class="a" style="left:50px;top:212px;width:1316px;height:1px;background:#cdcdcd"></div>
<div class="a" style="left:50px;top:232px;width:1316px;height:20px;background:#ebebeb"></div>
<div class="a" style="left:50px;top:232px;width:1316px;height:1px;background:#cdcdcd"></div>
<div class="a" style="left:50px;top:252px;width:1316px;height:20px;background:#fff"></div>
<div class="a" style="left:50px;top:252px;width:1316px;height:1px;background:#cdcdcd"></div>
<div class="a" style="left:50px;top:272px;width:1316px;height:20px;background:#ebebeb"></div>
<div class="a" style="left:50px;top:272px;width:1316px;height:1px;background:#cdcdcd"></div>
<div class="a" style="left:50px;top:292px;width:1316px;height:20px;background:#fff"></div>
<div class="a" style="left:50px;top:292px;width:1316px;height:1px;background:#cdcdcd"></div>
<div class="a" style="left:50px;top:312px;width:1316px;height:20px;background:#ebebeb"></div>
<div class="a" style="left:50px;top:312px;width:1316px;height:1px;background:#cdcdcd"></div>
<div class="a" style="left:50px;top:332px;width:1316px;height:20px;background:#fff"></div>
<div class="a" style="left:50px;top:332px;width:1316px;height:1px;background:#cdcdcd"></div>
<div class="a" style="left:50px;top:352px;width:1316px;height:20px;background:#ebebeb"></div>
<div class="a" style="left:50px;top:352px;width:1316px;height:1px;background:#cdcdcd"></div>
<div class="a" style="left:50px;top:372px;width:1316px;height:20px;background:#fff"></div>
<div class="a" style="left:50px;top:372px;width:1316px;height:1px;background:#cdcdcd"></div>
<div class="a" style="left:50px;top:392px;width:1316px;height:20px;background:#ebebeb"></div>
<div class="a" style="left:50px;top:392px;width:1316px;height:1px;background:#cdcdcd"></div>
<div class="a" style="left:50px;top:412px;width:1316px;height:20px;background:#fff"></div>
<div class="a" style="left:50px;top:412px;width:1316px;height:1px;background:#cdcdcd"></div>
<div class="a" style="left:50px;top:432px;width:1316px;height:20px;background:#ebebeb"></div>
<div class="a" style="left:50px;top:432px;width:1316px;height:1px;background:#cdcdcd"></div>
<div class="a" style="left:50px;top:452px;width:1316px;height:20px;background:#fff"></div>
<div class="a" style="left:50px;top:452px;width:1316px;height:1px;background:#cdcdcd"></div>
<div class="a" style="left:50px;top:472px;width:1316px;height:20px;background:#ebebeb"></div>
<div class="a" style="left:50px;top:472px;width:1316px;height:1px;background:#cdcdcd"></div>
<div class="a" style="left:48px;top:492px;width:1318px;height:20px;background:#c8c8c8"></div>
<div class="a" style="left:48px;top:149px;width:1px;height:343px;background:#f0f0f0"></div>
<div class="t" style="left:56px;top:151px">Ora</div>
<div class="t" style="left:132.20000000000002px;width:150px;text-align:right;top:151px">Simbolo</div>
<div class="t" style="left:208.4px;width:150px;text-align:right;top:151px">Ticket</div>
<div class="t" style="left:273.0px;width:150px;text-align:right;top:151px">Tipo</div>
<div class="t" style="left:378.4px;width:150px;text-align:right;top:151px">Volume</div>
<div class="t" style="left:489.20000000000005px;width:150px;text-align:right;top:151px">Prezzo</div>
<div class="t" style="left:597.2px;width:150px;text-align:right;top:151px">S / L</div>
<div class="t" style="left:704.6px;width:150px;text-align:right;top:151px">T / P</div>
<div class="t" style="left:844.9px;width:150px;text-align:right;top:151px">Ora</div>
<div class="t" style="left:952.8000000000001px;width:150px;text-align:right;top:151px">Prezzo</div>
<div class="t" style="left:1058.1px;width:150px;text-align:right;top:151px">Swap</div>
<div class="t" style="left:1210.3999999999999px;width:150px;text-align:right;top:151px">Profitto</div>
<svg class="a" style="left:93px;top:158px" width="7" height="4"><path d="M0 4h7L3.5 0z" fill="#000"/></svg>
<div class="a" style="left:190px;top:149px;width:1px;height:23px;background:#a0a0a0"></div>
<div class="a" style="left:287px;top:149px;width:1px;height:23px;background:#a0a0a0"></div>
<div class="a" style="left:363px;top:149px;width:1px;height:23px;background:#a0a0a0"></div>
<div class="a" style="left:428px;top:149px;width:1px;height:23px;background:#a0a0a0"></div>
<div class="a" style="left:536px;top:149px;width:1px;height:23px;background:#a0a0a0"></div>
<div class="a" style="left:644px;top:149px;width:1px;height:23px;background:#a0a0a0"></div>
<div class="a" style="left:752px;top:149px;width:1px;height:23px;background:#a0a0a0"></div>
<div class="a" style="left:860px;top:149px;width:1px;height:23px;background:#a0a0a0"></div>
<div class="a" style="left:1000px;top:149px;width:1px;height:23px;background:#a0a0a0"></div>
<div class="a" style="left:1108px;top:149px;width:1px;height:23px;background:#a0a0a0"></div>
<div class="a" style="left:1216px;top:149px;width:1px;height:23px;background:#a0a0a0"></div>
<div class="a" style="left:645px;top:193px;width:107px;height:19px;background:#fe9d9d"></div>
<div class="a" style="left:753px;top:213px;width:107px;height:19px;background:#5fee5f"></div>
<div class="a" style="left:753px;top:233px;width:107px;height:19px;background:#5fee5f"></div>
<div class="a" style="left:753px;top:253px;width:107px;height:19px;background:#5fee5f"></div>
<div class="a" style="left:753px;top:273px;width:107px;height:19px;background:#5fee5f"></div>
<div class="a" style="left:753px;top:293px;width:107px;height:19px;background:#5fee5f"></div>
<div class="a" style="left:645px;top:313px;width:107px;height:19px;background:#fe9d9d"></div>
<div class="a" style="left:753px;top:333px;width:107px;height:19px;background:#5fee5f"></div>
<div class="a" style="left:753px;top:353px;width:107px;height:19px;background:#5fee5f"></div>
<div class="a" style="left:645px;top:373px;width:107px;height:19px;background:#fe9d9d"></div>
<div class="a" style="left:645px;top:393px;width:107px;height:19px;background:#fe9d9d"></div>
<div class="a" style="left:753px;top:413px;width:107px;height:19px;background:#5fee5f"></div>
<div class="a" style="left:645px;top:433px;width:107px;height:19px;background:#fe9d9d"></div>
<div class="a" style="left:753px;top:453px;width:107px;height:19px;background:#5fee5f"></div>
<div class="a" style="left:645px;top:473px;width:107px;height:19px;background:#fe9d9d"></div>
<div class="a" style="left:190px;top:172px;width:1px;height:320px;background:#cdcdcd"></div>
<div class="a" style="left:287px;top:172px;width:1px;height:320px;background:#cdcdcd"></div>
<div class="a" style="left:363px;top:172px;width:1px;height:320px;background:#cdcdcd"></div>
<div class="a" style="left:428px;top:172px;width:1px;height:320px;background:#cdcdcd"></div>
<div class="a" style="left:536px;top:192px;width:1px;height:300px;background:#cdcdcd"></div>
<div class="a" style="left:644px;top:192px;width:1px;height:300px;background:#cdcdcd"></div>
<div class="a" style="left:752px;top:192px;width:1px;height:300px;background:#cdcdcd"></div>
<div class="a" style="left:860px;top:192px;width:1px;height:300px;background:#cdcdcd"></div>
<div class="a" style="left:1000px;top:192px;width:1px;height:300px;background:#cdcdcd"></div>
<div class="a" style="left:1108px;top:192px;width:1px;height:300px;background:#cdcdcd"></div>
<div class="a" style="left:1216px;top:172px;width:1px;height:320px;background:#cdcdcd"></div>
<svg class="a" style="left:53px;top:176px" width="13" height="13" viewBox="0 0 13 13"><circle cx="6.5" cy="6.5" r="5.3" stroke="#000" stroke-width="1.1" fill="none"/><path d="M6.5 3.3v6.4M3.3 6.5h6.4" stroke="#000" stroke-width="1.1"/></svg>
<div class="t" style="left:70.9px;top:173px;transform:scaleX(0.89);transform-origin:0 0">2025.08.18 12:50:16</div>
<div class="t" style="left:159.9px;width:200px;text-align:right;top:173px;color:#000;transform:scaleX(0.89);transform-origin:100% 0">52959007573</div>
<div class="t" style="left:275.0px;width:150px;text-align:right;top:173px;color:#000">balance</div>
<div class="t" style="left:1161.8999999999999px;width:200px;text-align:right;top:173px;color:#000;transform:scaleX(0.89);transform-origin:100% 0">10 000.00</div>
<svg class="a" style="left:54px;top:195px" width="12" height="15" viewBox="0 0 12 15"><rect x="0.75" y="0.9" width="9.6" height="12.9" rx="2" fill="#fff" stroke="#d93a3a" stroke-width="1.2"/><path d="M4 4.9h3M4 7.8h3" stroke="#d93a3a" stroke-width="1.1"/></svg>
<div class="t" style="left:70.9px;top:193px;transform:scaleX(0.89);transform-origin:0 0">2025.08.19 19:24:53</div>
<div class="t" style="left:133.6px;width:150px;text-align:right;top:193px;color:#000">xauusd</div>
<div class="t" style="left:159.9px;width:200px;text-align:right;top:193px;color:#000;transform:scaleX(0.89);transform-origin:100% 0">53009553919</div>
<div class="t" style="left:275.0px;width:150px;text-align:right;top:193px;color:#000">sell</div>
<div class="t" style="left:333.1px;width:200px;text-align:right;top:193px;color:#000;transform:scaleX(0.89);transform-origin:100% 0">0.2</div>
<div class="t" style="left:441.1px;width:200px;text-align:right;top:193px;color:#000;transform:scaleX(0.89);transform-origin:100% 0">3320.00</div>
<div class="t" style="left:549.1px;width:200px;text-align:right;top:193px;color:#000;transform:scaleX(0.89);transform-origin:100% 0">3360.00</div>
<div class="t" style="left:657.1px;width:200px;text-align:right;top:193px;color:#000;transform:scaleX(0.89);transform-origin:100% 0">3280.00</div>
<div class="t" style="left:796.9px;width:200px;text-align:right;top:193px;color:#000;transform:scaleX(0.89);transform-origin:100% 0">2025.08.22 17:10:25</div>
<div class="t" style="left:905.1px;width:200px;text-align:right;top:193px;color:#000;transform:scaleX(0.89);transform-origin:100% 0">3360.00</div>
<div class="t" style="left:1012.9px;width:200px;text-align:right;top:193px;color:#ff0000;transform:scaleX(0.89);transform-origin:100% 0">-4.60</div>
<div class="t" style="left:1161.8999999999999px;width:200px;text-align:right;top:193px;color:#ff0000;transform:scaleX(0.89);transform-origin:100% 0">-800.00</div>
<svg class="a" style="left:54px;top:215px" width="12" height="15" viewBox="0 0 12 15"><rect x="0.75" y="0.9" width="9.6" height="12.9" rx="2" fill="#fff" stroke="#1c64ac" stroke-width="1.2"/><path d="M4 4.9h3M4 7.8h3" stroke="#1c64ac" stroke-width="1.1"/></svg>
<div class="t" style="left:70.9px;top:213px;transform:scaleX(0.89);transform-origin:0 0">2025.08.21 01:05:00</div>
<div class="t" style="left:133.6px;width:150px;text-align:right;top:213px;color:#000">xauusd</div>
<div class="t" style="left:159.9px;width:200px;text-align:right;top:213px;color:#000;transform:scaleX(0.89);transform-origin:100% 0">53009541360</div>
<div class="t" style="left:275.0px;width:150px;text-align:right;top:213px;color:#000">buy</div>
<div class="t" style="left:333.1px;width:200px;text-align:right;top:213px;color:#000;transform:scaleX(0.89);transform-origin:100% 0">0.2</div>
<div class="t" style="left:441.1px;width:200px;text-align:right;top:213px;color:#000;transform:scaleX(0.89);transform-origin:100% 0">3350.00</div>
<div class="t" style="left:549.1px;width:200px;text-align:right;top:213px;color:#000;transform:scaleX(0.89);transform-origin:100% 0">3310.00</div>
<div class="t" style="left:657.1px;width:200px;text-align:right;top:213px;color:#000;transform:scaleX(0.89);transform-origin:100% 0">3390.00</div>
<div class="t" style="left:796.9px;width:200px;text-align:right;top:213px;color:#000;transform:scaleX(0.89);transform-origin:100% 0">2025.08.26 22:48:13</div>
<div class="t" style="left:905.1px;width:200px;text-align:right;top:213px;color:#000;transform:scaleX(0.89);transform-origin:100% 0">3390.00</div>
<div class="t" style="left:1012.9px;width:200px;text-align:right;top:213px;color:#ff0000;transform:scaleX(0.89);transform-origin:100% 0">-7.56</div>
<div class="t" style="left:1161.8999999999999px;width:200px;text-align:right;top:213px;color:#0000ff;transform:scaleX(0.89);transform-origin:100% 0">800.00</div>
<svg class="a" style="left:54px;top:235px" width="12" height="15" viewBox="0 0 12 15"><rect x="0.75" y="0.9" width="9.6" height="12.9" rx="2" fill="#fff" stroke="#1c64ac" stroke-width="1.2"/><path d="M4 4.9h3M4 7.8h3" stroke="#1c64ac" stroke-width="1.1"/></svg>
<div class="t" style="left:70.9px;top:233px;transform:scaleX(0.89);transform-origin:0 0">2025.08.28 11:41:28</div>
<div class="t" style="left:133.6px;width:150px;text-align:right;top:233px;color:#000">xauusd</div>
<div class="t" style="left:159.9px;width:200px;text-align:right;top:233px;color:#000;transform:scaleX(0.89);transform-origin:100% 0">53064699901</div>
<div class="t" style="left:275.0px;width:150px;text-align:right;top:233px;color:#000">buy</div>
<div class="t" style="left:333.1px;width:200px;text-align:right;top:233px;color:#000;transform:scaleX(0.89);transform-origin:100% 0">0.3</div>
<div class="t" style="left:441.1px;width:200px;text-align:right;top:233px;color:#000;transform:scaleX(0.89);transform-origin:100% 0">3400.00</div>
<div class="t" style="left:549.1px;width:200px;text-align:right;top:233px;color:#000;transform:scaleX(0.89);transform-origin:100% 0">3360.00</div>
<div class="t" style="left:657.1px;width:200px;text-align:right;top:233px;color:#000;transform:scaleX(0.89);transform-origin:100% 0">3440.00</div>
<div class="t" style="left:796.9px;width:200px;text-align:right;top:233px;color:#000;transform:scaleX(0.89);transform-origin:100% 0">2025.08.29 17:39:27</div>
<div class="t" style="left:905.1px;width:200px;text-align:right;top:233px;color:#000;transform:scaleX(0.89);transform-origin:100% 0">3440.00</div>
<div class="t" style="left:1012.9px;width:200px;text-align:right;top:233px;color:#ff0000;transform:scaleX(0.89);transform-origin:100% 0">-3.78</div>
<div class="t" style="left:1161.8999999999999px;width:200px;text-align:right;top:233px;color:#0000ff;transform:scaleX(0.89);transform-origin:100% 0">1 200.00</div>
<svg class="a" style="left:54px;top:255px" width="12" height="15" viewBox="0 0 12 15"><rect x="0.75" y="0.9" width="9.6" height="12.9" rx="2" fill="#fff" stroke="#1c64ac" stroke-width="1.2"/><path d="M4 4.9h3M4 7.8h3" stroke="#1c64ac" stroke-width="1.1"/></svg>
<div class="t" style="left:70.9px;top:253px;transform:scaleX(0.89);transform-origin:0 0">2025.08.28 21:54:05</div>
<div class="t" style="left:133.6px;width:150px;text-align:right;top:253px;color:#000">xauusd</div>
<div class="t" style="left:159.9px;width:200px;text-align:right;top:253px;color:#000;transform:scaleX(0.89);transform-origin:100% 0">53074300208</div>
<div class="t" style="left:275.0px;width:150px;text-align:right;top:253px;color:#000">buy</div>
<div class="t" style="left:333.1px;width:200px;text-align:right;top:253px;color:#000;transform:scaleX(0.89);transform-origin:100% 0">0.3</div>
<div class="t" style="left:441.1px;width:200px;text-align:right;top:253px;color:#000;transform:scaleX(0.89);transform-origin:100% 0">3420.00</div>
<div class="t" style="left:549.1px;width:200px;text-align:right;top:253px;color:#000;transform:scaleX(0.89);transform-origin:100% 0">3380.00</div>
<div class="t" style="left:657.1px;width:200px;text-align:right;top:253px;color:#000;transform:scaleX(0.89);transform-origin:100% 0">3460.00</div>
<div class="t" style="left:796.9px;width:200px;text-align:right;top:253px;color:#000;transform:scaleX(0.89);transform-origin:100% 0">2025.09.01 05:06:20</div>
<div class="t" style="left:905.1px;width:200px;text-align:right;top:253px;color:#000;transform:scaleX(0.89);transform-origin:100% 0">3460.00</div>
<div class="t" style="left:1012.9px;width:200px;text-align:right;top:253px;color:#ff0000;transform:scaleX(0.89);transform-origin:100% 0">-7.56</div>
<div class="t" style="left:1161.8999999999999px;width:200px;text-align:right;top:253px;color:#0000ff;transform:scaleX(0.89);transform-origin:100% 0">1 200.00</div>
<svg class="a" style="left:54px;top:275px" width="12" height="15" viewBox="0 0 12 15"><rect x="0.75" y="0.9" width="9.6" height="12.9" rx="2" fill="#fff" stroke="#1c64ac" stroke-width="1.2"/><path d="M4 4.9h3M4 7.8h3" stroke="#1c64ac" stroke-width="1.1"/></svg>
<div class="t" style="left:70.9px;top:273px;transform:scaleX(0.89);transform-origin:0 0">2025.09.02 04:16:33</div>
<div class="t" style="left:133.6px;width:150px;text-align:right;top:273px;color:#000">xauusd</div>
<div class="t" style="left:159.9px;width:200px;text-align:right;top:273px;color:#000;transform:scaleX(0.89);transform-origin:100% 0">53092922369</div>
<div class="t" style="left:275.0px;width:150px;text-align:right;top:273px;color:#000">buy</div>
<div class="t" style="left:333.1px;width:200px;text-align:right;top:273px;color:#000;transform:scaleX(0.89);transform-origin:100% 0">0.4</div>
<div class="t" style="left:441.1px;width:200px;text-align:right;top:273px;color:#000;transform:scaleX(0.89);transform-origin:100% 0">3490.00</div>
<div class="t" style="left:549.1px;width:200px;text-align:right;top:273px;color:#000;transform:scaleX(0.89);transform-origin:100% 0">3450.00</div>
<div class="t" style="left:657.1px;width:200px;text-align:right;top:273px;color:#000;transform:scaleX(0.89);transform-origin:100% 0">3530.00</div>
<div class="t" style="left:796.9px;width:200px;text-align:right;top:273px;color:#000;transform:scaleX(0.89);transform-origin:100% 0">2025.09.02 20:30:49</div>
<div class="t" style="left:905.1px;width:200px;text-align:right;top:273px;color:#000;transform:scaleX(0.89);transform-origin:100% 0">3530.00</div>
<div class="t" style="left:1161.8999999999999px;width:200px;text-align:right;top:273px;color:#0000ff;transform:scaleX(0.89);transform-origin:100% 0">1 600.00</div>
<svg class="a" style="left:54px;top:295px" width="12" height="15" viewBox="0 0 12 15"><rect x="0.75" y="0.9" width="9.6" height="12.9" rx="2" fill="#fff" stroke="#1c64ac" stroke-width="1.2"/><path d="M4 4.9h3M4 7.8h3" stroke="#1c64ac" stroke-width="1.1"/></svg>
<div class="t" style="left:70.9px;top:293px;transform:scaleX(0.89);transform-origin:0 0">2025.09.02 20:30:48</div>
<div class="t" style="left:133.6px;width:150px;text-align:right;top:293px;color:#000">xauusd</div>
<div class="t" style="left:159.9px;width:200px;text-align:right;top:293px;color:#000;transform:scaleX(0.89);transform-origin:100% 0">53101319491</div>
<div class="t" style="left:275.0px;width:150px;text-align:right;top:293px;color:#000">buy</div>
<div class="t" style="left:333.1px;width:200px;text-align:right;top:293px;color:#000;transform:scaleX(0.89);transform-origin:100% 0">0.4</div>
<div class="t" style="left:441.1px;width:200px;text-align:right;top:293px;color:#000;transform:scaleX(0.89);transform-origin:100% 0">3530.00</div>
<div class="t" style="left:549.1px;width:200px;text-align:right;top:293px;color:#000;transform:scaleX(0.89);transform-origin:100% 0">3490.00</div>
<div class="t" style="left:657.1px;width:200px;text-align:right;top:293px;color:#000;transform:scaleX(0.89);transform-origin:100% 0">3570.00</div>
<div class="t" style="left:796.9px;width:200px;text-align:right;top:293px;color:#000;transform:scaleX(0.89);transform-origin:100% 0">2025.09.03 19:55:40</div>
<div class="t" style="left:905.1px;width:200px;text-align:right;top:293px;color:#000;transform:scaleX(0.89);transform-origin:100% 0">3570.00</div>
<div class="t" style="left:1012.9px;width:200px;text-align:right;top:293px;color:#ff0000;transform:scaleX(0.89);transform-origin:100% 0">-5.04</div>
<div class="t" style="left:1161.8999999999999px;width:200px;text-align:right;top:293px;color:#0000ff;transform:scaleX(0.89);transform-origin:100% 0">1 600.00</div>
<svg class="a" style="left:54px;top:315px" width="12" height="15" viewBox="0 0 12 15"><rect x="0.75" y="0.9" width="9.6" height="12.9" rx="2" fill="#fff" stroke="#1c64ac" stroke-width="1.2"/><path d="M4 4.9h3M4 7.8h3" stroke="#1c64ac" stroke-width="1.1"/></svg>
<div class="t" style="left:70.9px;top:313px;transform:scaleX(0.89);transform-origin:0 0">2025.09.03 19:47:53</div>
<div class="t" style="left:133.6px;width:150px;text-align:right;top:313px;color:#000">xauusd</div>
<div class="t" style="left:159.9px;width:200px;text-align:right;top:313px;color:#000;transform:scaleX(0.89);transform-origin:100% 0">53112708180</div>
<div class="t" style="left:275.0px;width:150px;text-align:right;top:313px;color:#000">buy</div>
<div class="t" style="left:333.1px;width:200px;text-align:right;top:313px;color:#000;transform:scaleX(0.89);transform-origin:100% 0">0.4</div>
<div class="t" style="left:441.1px;width:200px;text-align:right;top:313px;color:#000;transform:scaleX(0.89);transform-origin:100% 0">3570.00</div>
<div class="t" style="left:549.1px;width:200px;text-align:right;top:313px;color:#000;transform:scaleX(0.89);transform-origin:100% 0">3530.00</div>
<div class="t" style="left:657.1px;width:200px;text-align:right;top:313px;color:#000;transform:scaleX(0.89);transform-origin:100% 0">3610.00</div>
<div class="t" style="left:796.9px;width:200px;text-align:right;top:313px;color:#000;transform:scaleX(0.89);transform-origin:100% 0">2025.09.04 05:50:13</div>
<div class="t" style="left:905.1px;width:200px;text-align:right;top:313px;color:#000;transform:scaleX(0.89);transform-origin:100% 0">3530.00</div>
<div class="t" style="left:1012.9px;width:200px;text-align:right;top:313px;color:#ff0000;transform:scaleX(0.89);transform-origin:100% 0">-15.12</div>
<div class="t" style="left:1161.8999999999999px;width:200px;text-align:right;top:313px;color:#ff0000;transform:scaleX(0.89);transform-origin:100% 0">-1 600.00</div>
<svg class="a" style="left:54px;top:335px" width="12" height="15" viewBox="0 0 12 15"><rect x="0.75" y="0.9" width="9.6" height="12.9" rx="2" fill="#fff" stroke="#1c64ac" stroke-width="1.2"/><path d="M4 4.9h3M4 7.8h3" stroke="#1c64ac" stroke-width="1.1"/></svg>
<div class="t" style="left:70.9px;top:333px;transform:scaleX(0.89);transform-origin:0 0">2025.09.05 08:02:26</div>
<div class="t" style="left:133.6px;width:150px;text-align:right;top:333px;color:#000">xauusd</div>
<div class="t" style="left:159.9px;width:200px;text-align:right;top:333px;color:#000;transform:scaleX(0.89);transform-origin:100% 0">53123801610</div>
<div class="t" style="left:275.0px;width:150px;text-align:right;top:333px;color:#000">buy</div>
<div class="t" style="left:333.1px;width:200px;text-align:right;top:333px;color:#000;transform:scaleX(0.89);transform-origin:100% 0">0.4</div>
<div class="t" style="left:441.1px;width:200px;text-align:right;top:333px;color:#000;transform:scaleX(0.89);transform-origin:100% 0">3560.00</div>
<div class="t" style="left:549.1px;width:200px;text-align:right;top:333px;color:#000;transform:scaleX(0.89);transform-origin:100% 0">3520.00</div>
<div class="t" style="left:657.1px;width:200px;text-align:right;top:333px;color:#000;transform:scaleX(0.89);transform-origin:100% 0">3600.00</div>
<div class="t" style="left:796.9px;width:200px;text-align:right;top:333px;color:#000;transform:scaleX(0.89);transform-origin:100% 0">2025.09.05 19:25:03</div>
<div class="t" style="left:905.1px;width:200px;text-align:right;top:333px;color:#000;transform:scaleX(0.89);transform-origin:100% 0">3600.00</div>
<div class="t" style="left:1161.8999999999999px;width:200px;text-align:right;top:333px;color:#0000ff;transform:scaleX(0.89);transform-origin:100% 0">1 600.00</div>
<svg class="a" style="left:54px;top:355px" width="12" height="15" viewBox="0 0 12 15"><rect x="0.75" y="0.9" width="9.6" height="12.9" rx="2" fill="#fff" stroke="#1c64ac" stroke-width="1.2"/><path d="M4 4.9h3M4 7.8h3" stroke="#1c64ac" stroke-width="1.1"/></svg>
<div class="t" style="left:70.9px;top:353px;transform:scaleX(0.89);transform-origin:0 0">2025.09.08 13:14:55</div>
<div class="t" style="left:133.6px;width:150px;text-align:right;top:353px;color:#000">xauusd</div>
<div class="t" style="left:159.9px;width:200px;text-align:right;top:353px;color:#000;transform:scaleX(0.89);transform-origin:100% 0">53146472771</div>
<div class="t" style="left:275.0px;width:150px;text-align:right;top:353px;color:#000">buy</div>
<div class="t" style="left:333.1px;width:200px;text-align:right;top:353px;color:#000;transform:scaleX(0.89);transform-origin:100% 0">0.5</div>
<div class="t" style="left:441.1px;width:200px;text-align:right;top:353px;color:#000;transform:scaleX(0.89);transform-origin:100% 0">3620.00</div>
<div class="t" style="left:549.1px;width:200px;text-align:right;top:353px;color:#000;transform:scaleX(0.89);transform-origin:100% 0">3580.00</div>
<div class="t" style="left:657.1px;width:200px;text-align:right;top:353px;color:#000;transform:scaleX(0.89);transform-origin:100% 0">3660.00</div>
<div class="t" style="left:796.9px;width:200px;text-align:right;top:353px;color:#000;transform:scaleX(0.89);transform-origin:100% 0">2025.09.09 16:27:30</div>
<div class="t" style="left:905.1px;width:200px;text-align:right;top:353px;color:#000;transform:scaleX(0.89);transform-origin:100% 0">3660.00</div>
<div class="t" style="left:1012.9px;width:200px;text-align:right;top:353px;color:#ff0000;transform:scaleX(0.89);transform-origin:100% 0">-6.30</div>
<div class="t" style="left:1161.8999999999999px;width:200px;text-align:right;top:353px;color:#0000ff;transform:scaleX(0.89);transform-origin:100% 0">2 000.00</div>
<svg class="a" style="left:54px;top:375px" width="12" height="15" viewBox="0 0 12 15"><rect x="0.75" y="0.9" width="9.6" height="12.9" rx="2" fill="#fff" stroke="#1c64ac" stroke-width="1.2"/><path d="M4 4.9h3M4 7.8h3" stroke="#1c64ac" stroke-width="1.1"/></svg>
<div class="t" style="left:70.9px;top:373px;transform:scaleX(0.89);transform-origin:0 0">2025.09.09 16:27:06</div>
<div class="t" style="left:133.6px;width:150px;text-align:right;top:373px;color:#000">xauusd</div>
<div class="t" style="left:159.9px;width:200px;text-align:right;top:373px;color:#000;transform:scaleX(0.89);transform-origin:100% 0">53159743367</div>
<div class="t" style="left:275.0px;width:150px;text-align:right;top:373px;color:#000">buy</div>
<div class="t" style="left:333.1px;width:200px;text-align:right;top:373px;color:#000;transform:scaleX(0.89);transform-origin:100% 0">0.5</div>
<div class="t" style="left:441.1px;width:200px;text-align:right;top:373px;color:#000;transform:scaleX(0.89);transform-origin:100% 0">3660.00</div>
<div class="t" style="left:549.1px;width:200px;text-align:right;top:373px;color:#000;transform:scaleX(0.89);transform-origin:100% 0">3620.00</div>
<div class="t" style="left:657.1px;width:200px;text-align:right;top:373px;color:#000;transform:scaleX(0.89);transform-origin:100% 0">3700.00</div>
<div class="t" style="left:796.9px;width:200px;text-align:right;top:373px;color:#000;transform:scaleX(0.89);transform-origin:100% 0">2025.09.11 12:13:19</div>
<div class="t" style="left:905.1px;width:200px;text-align:right;top:373px;color:#000;transform:scaleX(0.89);transform-origin:100% 0">3620.00</div>
<div class="t" style="left:1012.9px;width:200px;text-align:right;top:373px;color:#ff0000;transform:scaleX(0.89);transform-origin:100% 0">-25.20</div>
<div class="t" style="left:1161.8999999999999px;width:200px;text-align:right;top:373px;color:#ff0000;transform:scaleX(0.89);transform-origin:100% 0">-2 000.00</div>
<svg class="a" style="left:54px;top:395px" width="12" height="15" viewBox="0 0 12 15"><rect x="0.75" y="0.9" width="9.6" height="12.9" rx="2" fill="#fff" stroke="#d93a3a" stroke-width="1.2"/><path d="M4 4.9h3M4 7.8h3" stroke="#d93a3a" stroke-width="1.1"/></svg>
<div class="t" style="left:70.9px;top:393px;transform:scaleX(0.89);transform-origin:0 0">2025.09.09 18:16:12</div>
<div class="t" style="left:133.6px;width:150px;text-align:right;top:393px;color:#000">xauusd</div>
<div class="t" style="left:159.9px;width:200px;text-align:right;top:393px;color:#000;transform:scaleX(0.89);transform-origin:100% 0">53146488488</div>
<div class="t" style="left:275.0px;width:150px;text-align:right;top:393px;color:#000">sell</div>
<div class="t" style="left:333.1px;width:200px;text-align:right;top:393px;color:#000;transform:scaleX(0.89);transform-origin:100% 0">0.5</div>
<div class="t" style="left:441.1px;width:200px;text-align:right;top:393px;color:#000;transform:scaleX(0.89);transform-origin:100% 0">3630.00</div>
<div class="t" style="left:549.1px;width:200px;text-align:right;top:393px;color:#000;transform:scaleX(0.89);transform-origin:100% 0">3670.00</div>
<div class="t" style="left:657.1px;width:200px;text-align:right;top:393px;color:#000;transform:scaleX(0.89);transform-origin:100% 0">3590.00</div>
<div class="t" style="left:796.9px;width:200px;text-align:right;top:393px;color:#000;transform:scaleX(0.89);transform-origin:100% 0">2025.09.15 18:47:26</div>
<div class="t" style="left:905.1px;width:200px;text-align:right;top:393px;color:#000;transform:scaleX(0.89);transform-origin:100% 0">3670.00</div>
<div class="t" style="left:1012.9px;width:200px;text-align:right;top:393px;color:#ff0000;transform:scaleX(0.89);transform-origin:100% 0">-13.80</div>
<div class="t" style="left:1161.8999999999999px;width:200px;text-align:right;top:393px;color:#ff0000;transform:scaleX(0.89);transform-origin:100% 0">-2 000.00</div>
<svg class="a" style="left:54px;top:415px" width="12" height="15" viewBox="0 0 12 15"><rect x="0.75" y="0.9" width="9.6" height="12.9" rx="2" fill="#fff" stroke="#1c64ac" stroke-width="1.2"/><path d="M4 4.9h3M4 7.8h3" stroke="#1c64ac" stroke-width="1.1"/></svg>
<div class="t" style="left:70.9px;top:413px;transform:scaleX(0.89);transform-origin:0 0">2025.09.11 15:32:57</div>
<div class="t" style="left:133.6px;width:150px;text-align:right;top:413px;color:#000">xauusd</div>
<div class="t" style="left:159.9px;width:200px;text-align:right;top:413px;color:#000;transform:scaleX(0.89);transform-origin:100% 0">53184801197</div>
<div class="t" style="left:275.0px;width:150px;text-align:right;top:413px;color:#000">buy</div>
<div class="t" style="left:333.1px;width:200px;text-align:right;top:413px;color:#000;transform:scaleX(0.89);transform-origin:100% 0">0.5</div>
<div class="t" style="left:441.1px;width:200px;text-align:right;top:413px;color:#000;transform:scaleX(0.89);transform-origin:100% 0">3640.00</div>
<div class="t" style="left:549.1px;width:200px;text-align:right;top:413px;color:#000;transform:scaleX(0.89);transform-origin:100% 0">3600.00</div>
<div class="t" style="left:657.1px;width:200px;text-align:right;top:413px;color:#000;transform:scaleX(0.89);transform-origin:100% 0">3680.00</div>
<div class="t" style="left:796.9px;width:200px;text-align:right;top:413px;color:#000;transform:scaleX(0.89);transform-origin:100% 0">2025.09.15 18:57:46</div>
<div class="t" style="left:905.1px;width:200px;text-align:right;top:413px;color:#000;transform:scaleX(0.89);transform-origin:100% 0">3680.00</div>
<div class="t" style="left:1012.9px;width:200px;text-align:right;top:413px;color:#ff0000;transform:scaleX(0.89);transform-origin:100% 0">-12.60</div>
<div class="t" style="left:1161.8999999999999px;width:200px;text-align:right;top:413px;color:#0000ff;transform:scaleX(0.89);transform-origin:100% 0">2 000.00</div>
<svg class="a" style="left:54px;top:435px" width="12" height="15" viewBox="0 0 12 15"><rect x="0.75" y="0.9" width="9.6" height="12.9" rx="2" fill="#fff" stroke="#1c64ac" stroke-width="1.2"/><path d="M4 4.9h3M4 7.8h3" stroke="#1c64ac" stroke-width="1.1"/></svg>
<div class="t" style="left:70.9px;top:433px;transform:scaleX(0.89);transform-origin:0 0">2025.09.15 18:57:34</div>
<div class="t" style="left:133.6px;width:150px;text-align:right;top:433px;color:#000">xauusd</div>
<div class="t" style="left:159.9px;width:200px;text-align:right;top:433px;color:#000;transform:scaleX(0.89);transform-origin:100% 0">53213887353</div>
<div class="t" style="left:275.0px;width:150px;text-align:right;top:433px;color:#000">buy</div>
<div class="t" style="left:333.1px;width:200px;text-align:right;top:433px;color:#000;transform:scaleX(0.89);transform-origin:100% 0">0.5</div>
<div class="t" style="left:441.1px;width:200px;text-align:right;top:433px;color:#000;transform:scaleX(0.89);transform-origin:100% 0">3680.00</div>
<div class="t" style="left:549.1px;width:200px;text-align:right;top:433px;color:#000;transform:scaleX(0.89);transform-origin:100% 0">3640.00</div>
<div class="t" style="left:657.1px;width:200px;text-align:right;top:433px;color:#000;transform:scaleX(0.89);transform-origin:100% 0">3720.00</div>
<div class="t" style="left:796.9px;width:200px;text-align:right;top:433px;color:#000;transform:scaleX(0.89);transform-origin:100% 0">2025.09.18 09:10:20</div>
<div class="t" style="left:905.1px;width:200px;text-align:right;top:433px;color:#000;transform:scaleX(0.89);transform-origin:100% 0">3640.00</div>
<div class="t" style="left:1012.9px;width:200px;text-align:right;top:433px;color:#ff0000;transform:scaleX(0.89);transform-origin:100% 0">-31.50</div>
<div class="t" style="left:1161.8999999999999px;width:200px;text-align:right;top:433px;color:#ff0000;transform:scaleX(0.89);transform-origin:100% 0">-2 000.00</div>
<svg class="a" style="left:54px;top:455px" width="12" height="15" viewBox="0 0 12 15"><rect x="0.75" y="0.9" width="9.6" height="12.9" rx="2" fill="#fff" stroke="#d93a3a" stroke-width="1.2"/><path d="M4 4.9h3M4 7.8h3" stroke="#d93a3a" stroke-width="1.1"/></svg>
<div class="t" style="left:70.9px;top:453px;transform:scaleX(0.89);transform-origin:0 0">2025.09.16 18:33:48</div>
<div class="t" style="left:133.6px;width:150px;text-align:right;top:453px;color:#000">xauusd</div>
<div class="t" style="left:159.9px;width:200px;text-align:right;top:453px;color:#000;transform:scaleX(0.89);transform-origin:100% 0">53227192063</div>
<div class="t" style="left:275.0px;width:150px;text-align:right;top:453px;color:#000">sell</div>
<div class="t" style="left:333.1px;width:200px;text-align:right;top:453px;color:#000;transform:scaleX(0.89);transform-origin:100% 0">0.5</div>
<div class="t" style="left:441.1px;width:200px;text-align:right;top:453px;color:#000;transform:scaleX(0.89);transform-origin:100% 0">3680.00</div>
<div class="t" style="left:549.1px;width:200px;text-align:right;top:453px;color:#000;transform:scaleX(0.89);transform-origin:100% 0">3720.00</div>
<div class="t" style="left:657.1px;width:200px;text-align:right;top:453px;color:#000;transform:scaleX(0.89);transform-origin:100% 0">3640.00</div>
<div class="t" style="left:796.9px;width:200px;text-align:right;top:453px;color:#000;transform:scaleX(0.89);transform-origin:100% 0">2025.09.18 09:10:24</div>
<div class="t" style="left:905.1px;width:200px;text-align:right;top:453px;color:#000;transform:scaleX(0.89);transform-origin:100% 0">3640.00</div>
<div class="t" style="left:1012.9px;width:200px;text-align:right;top:453px;color:#ff0000;transform:scaleX(0.89);transform-origin:100% 0">-9.20</div>
<div class="t" style="left:1161.8999999999999px;width:200px;text-align:right;top:453px;color:#0000ff;transform:scaleX(0.89);transform-origin:100% 0">2 000.00</div>
<svg class="a" style="left:54px;top:475px" width="12" height="15" viewBox="0 0 12 15"><rect x="0.75" y="0.9" width="9.6" height="12.9" rx="2" fill="#fff" stroke="#d93a3a" stroke-width="1.2"/><path d="M4 4.9h3M4 7.8h3" stroke="#d93a3a" stroke-width="1.1"/></svg>
<div class="t" style="left:70.9px;top:473px;transform:scaleX(0.89);transform-origin:0 0">2025.09.18 09:10:20</div>
<div class="t" style="left:133.6px;width:150px;text-align:right;top:473px;color:#000">xauusd</div>
<div class="t" style="left:159.9px;width:200px;text-align:right;top:473px;color:#000;transform:scaleX(0.89);transform-origin:100% 0">53239995195</div>
<div class="t" style="left:275.0px;width:150px;text-align:right;top:473px;color:#000">sell</div>
<div class="t" style="left:333.1px;width:200px;text-align:right;top:473px;color:#000;transform:scaleX(0.89);transform-origin:100% 0">0.5</div>
<div class="t" style="left:441.1px;width:200px;text-align:right;top:473px;color:#000;transform:scaleX(0.89);transform-origin:100% 0">3640.00</div>
<div class="t" style="left:549.1px;width:200px;text-align:right;top:473px;color:#000;transform:scaleX(0.89);transform-origin:100% 0">3680.00</div>
<div class="t" style="left:657.1px;width:200px;text-align:right;top:473px;color:#000;transform:scaleX(0.89);transform-origin:100% 0">3600.00</div>
<div class="t" style="left:796.9px;width:200px;text-align:right;top:473px;color:#000;transform:scaleX(0.89);transform-origin:100% 0">2025.09.19 21:00:42</div>
<div class="t" style="left:905.1px;width:200px;text-align:right;top:473px;color:#000;transform:scaleX(0.89);transform-origin:100% 0">3680.00</div>
<div class="t" style="left:1012.9px;width:200px;text-align:right;top:473px;color:#ff0000;transform:scaleX(0.89);transform-origin:100% 0">-2.30</div>
<div class="t" style="left:1161.8999999999999px;width:200px;text-align:right;top:473px;color:#ff0000;transform:scaleX(0.89);transform-origin:100% 0">-2 000.00</div>
<svg class="a" style="left:53px;top:496px" width="13" height="13" viewBox="0 0 13 13"><circle cx="6.5" cy="6.5" r="5.3" stroke="#000" stroke-width="1.1" fill="none"/><path d="M6.5 3.3v6.4M3.3 6.5h6.4" stroke="#000" stroke-width="1.1"/></svg>
<div class="t" style="left:70.9px;top:493px;font-weight:bold;letter-spacing:0.065px">Profitto: 3 455.44</div>
<div class="t" style="left:174.7px;top:493px;font-weight:bold;letter-spacing:-0.132px">Credito: 0.00</div>
<div class="t" style="left:251.7px;top:493px;font-weight:bold;letter-spacing:-0.070px">Deposito: 10 000.00</div>
<div class="t" style="left:368.8px;top:493px;font-weight:bold;letter-spacing:-0.130px">Prelievo: 0.00</div>
<div class="t" style="left:451.0px;top:493px;font-weight:bold;letter-spacing:-0.199px">Bilancio: 13 455.44</div>
<div class="t" style="left:1012.9px;width:200px;text-align:right;top:493px;color:#000;font-weight:bold;transform:scaleX(1.0);transform-origin:100% 0">-144.56</div>
<div class="t" style="left:1161.8999999999999px;width:200px;text-align:right;top:493px;color:#000;font-weight:bold;transform:scaleX(1.0);transform-origin:100% 0">3 600.00</div>
</body></html>
